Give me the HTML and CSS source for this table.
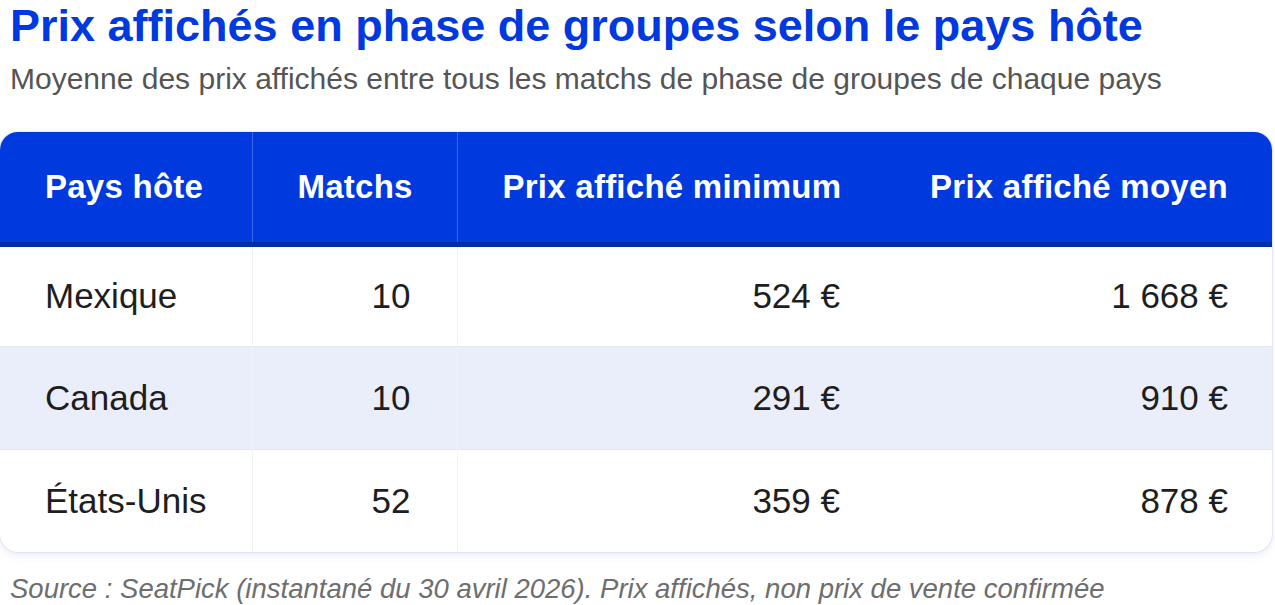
FILE: index.html
```html
<!DOCTYPE html>
<html lang="fr">
<head>
<meta charset="utf-8">
<title>Prix affichés en phase de groupes selon le pays hôte</title>
<link rel="stylesheet" href="styles.css">
</head>
<body>
<div class="page">
  <header class="intro">
    <h1 class="title">Prix affichés en phase de groupes selon le pays hôte</h1>
    <p class="subtitle">Moyenne des prix affichés entre tous les matchs de phase de groupes de chaque pays</p>
  </header>
  <div class="card">
    <table class="prices">
      <thead>
        <tr>
          <th class="c1">Pays hôte</th>
          <th class="c2 num">Matchs</th>
          <th class="c3 num">Prix affiché minimum</th>
          <th class="c4 num">Prix affiché moyen</th>
        </tr>
      </thead>
      <tbody>
        <tr>
          <td>Mexique</td>
          <td class="num">10</td>
          <td class="num">524 €</td>
          <td class="num">1 668 €</td>
        </tr>
        <tr class="alt">
          <td>Canada</td>
          <td class="num">10</td>
          <td class="num">291 €</td>
          <td class="num">910 €</td>
        </tr>
        <tr>
          <td>États-Unis</td>
          <td class="num">52</td>
          <td class="num">359 €</td>
          <td class="num">878 €</td>
        </tr>
      </tbody>
    </table>
  </div>
  <p class="source">Source : SeatPick (instantané du 30 avril 2026). Prix affichés, non prix de vente confirmée</p>
</div>
</body>
</html>
```
FILE: styles.css
```css
* { box-sizing: border-box; }
html, body {
  margin: 0;
  padding: 0;
  background: #ffffff;
  font-family: "Liberation Sans", Arial, sans-serif;
}
.page {
  width: 1275px;
}
.intro {
  padding: 0 10px;
}
.title {
  margin: 0;
  font-size: 45px;
  line-height: 52px;
  font-weight: 700;
  color: #0039dd;
}
.subtitle {
  margin: 7px 0 0;
  font-size: 30px;
  line-height: 40px;
  color: #555555;
}
.card {
  margin-top: 33px;
  width: 1272px;
  border-radius: 18px;
  overflow: hidden;
  background: #ffffff;
  box-shadow: 0 3px 10px rgba(40, 60, 160, 0.10), 0 0 0 1px rgba(225, 230, 246, 0.6);
}
.prices {
  width: 100%;
  border-collapse: collapse;
  table-layout: fixed;
  font-size: 35px;
}
.prices th {
  height: 112px;
  background: #0039dd;
  color: #ffffff;
  font-weight: 700;
  font-size: 33px;
  letter-spacing: 0.25px;
  white-space: nowrap;
  text-align: left;
  padding: 0 44px 0 45px;
  border-bottom: 5px solid #0030a8;
  border-left: 1px solid #3a66e8;
}
.prices th:first-child { border-left: none; }
.prices th.c4 { border-left: none; }
.prices .c1 { width: 252px; }
.prices .c2 { width: 205px; }
.prices .c3 { width: 428px; }
.prices td {
  height: 103px;
  padding: 0 44px 0 45px;
  color: #1e1e1e;
  white-space: nowrap;
  border-top: 1px solid #e3e7f3;
  border-left: 1px solid #f1f3fa;
}
.prices th:nth-child(2),
.prices td:nth-child(2) { padding-right: 46px; }
.prices th:nth-child(3),
.prices td:nth-child(3) { padding-right: 45px; }
.prices td:first-child { border-left: none; }
.prices td:nth-child(4) { border-left: none; }
.prices tbody tr:first-child td { border-top: none; height: 102px; }
.prices tr.alt td { background: #eaeefa; }
.prices .num { text-align: right; }
.source {
  margin: 21px 0 0;
  padding: 0 10px;
  font-size: 27.5px;
  line-height: 32px;
  font-style: italic;
  color: #6e6e6e;
}
```
